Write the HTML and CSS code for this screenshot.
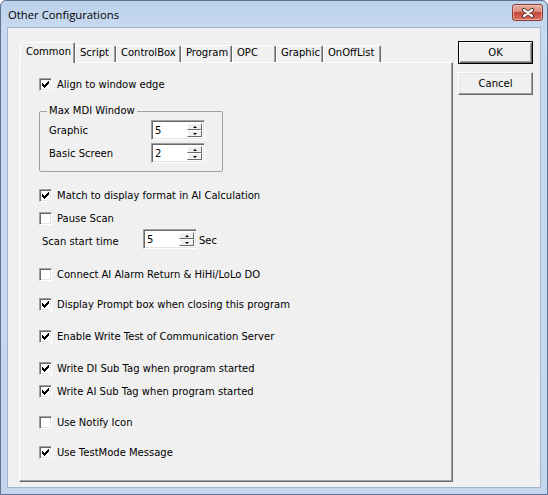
FILE: index.html
```html
<!DOCTYPE html>
<html lang="en">
<head>
    <meta charset="UTF-8">
    <title>Other Configurations</title>
    <link rel="stylesheet" href="styles.css">
</head>
<body>
    <div class="window">
        <div class="titlebar">
            <span class="title">Other Configurations</span>
            <button class="close" aria-label="Close">
                <svg width="14" height="10" viewBox="0 0 14 10">
                    <path d="M3 2 L11 8 M11 2 L3 8" stroke="#4a2a28" stroke-width="4" stroke-linecap="round"/>
                    <path d="M3 2 L11 8 M11 2 L3 8" stroke="#fff" stroke-width="2.2" stroke-linecap="round"/>
                </svg>
            </button>
        </div>

        <div class="client">
            <div class="tabs">
                <div class="tabstrip">
                    <div class="tab active">Common</div>
                    <div class="tab">Script</div>
                    <div class="tab">ControlBox</div>
                    <div class="tab">Program</div>
                    <div class="tab">OPC</div>
                    <div class="tab">Graphic</div>
                    <div class="tab">OnOffList</div>
                </div>

                <div class="page">
                    <label class="check"><span class="box on"></span>Align to window edge</label>

                    <fieldset class="group">
                        <legend>Max MDI Window</legend>
                        <div class="field">
                            <span class="field-label">Graphic</span>
                            <span class="spin"><span class="spin-value">5</span><span class="spin-btns"><span class="spin-btn up"></span><span class="spin-btn down"></span></span></span>
                        </div>
                        <div class="field">
                            <span class="field-label">Basic Screen</span>
                            <span class="spin"><span class="spin-value">2</span><span class="spin-btns"><span class="spin-btn up"></span><span class="spin-btn down"></span></span></span>
                        </div>
                    </fieldset>

                    <label class="check gap-17"><span class="box on"></span>Match to display format in AI Calculation</label>
                    <label class="check gap-10"><span class="box"></span>Pause Scan</label>

                    <div class="field scan">
                        <span class="field-label">Scan start time</span>
                        <span class="spin"><span class="spin-value">5</span><span class="spin-btns"><span class="spin-btn up"></span><span class="spin-btn down"></span></span></span>
                        <span class="unit">Sec</span>
                    </div>

                    <label class="check"><span class="box"></span>Connect AI Alarm Return &amp; HiHi/LoLo DO</label>
                    <label class="check gap-17"><span class="box on"></span>Display Prompt box when closing this program</label>
                    <label class="check"><span class="box on"></span>Enable Write Test of Communication Server</label>
                    <label class="check"><span class="box on"></span>Write DI Sub Tag when program started</label>
                    <label class="check gap-10"><span class="box on"></span>Write AI Sub Tag when program started</label>
                    <label class="check gap-18"><span class="box"></span>Use Notify Icon</label>
                    <label class="check gap-17"><span class="box on"></span>Use TestMode Message</label>
                </div>
            </div>

            <div class="actions">
                <button class="btn default">OK</button>
                <button class="btn">Cancel</button>
            </div>
        </div>
    </div>
</body>
</html>
```

FILE: styles.css
```css
* {
    box-sizing: border-box;
}

body {
    margin: 0;
    font-family: 'DejaVu Sans', sans-serif;
    font-size: 10px;
    color: #000;
    background: #fff;
}

.window {
    width: 548px;
    height: 495px;
    border: 1px solid #5d7294;
    border-radius: 6px 6px 0 0;
    background: linear-gradient(#bcd1ea, #c8daf0 30px, #c3d6ee);
    display: flex;
    flex-direction: column;
}

.titlebar {
    height: 26px;
    display: flex;
    align-items: center;
    padding: 0 4px 0 7px;
}

.title {
    flex: 1;
    font-family: 'Open Sans', sans-serif;
    font-size: 11.3px;
    color: #000;
}

.close {
    align-self: flex-start;
    margin-top: 3px;
    width: 31px;
    height: 17px;
    padding: 0;
    border: 1px solid #8b3b33;
    border-radius: 3px;
    background: linear-gradient(#eab0a4, #d98778 50%, #c4483a 50%, #d67363);
    box-shadow: inset 0 0 0 1px rgba(255, 220, 210, 0.5);
    display: flex;
    align-items: center;
    justify-content: center;
}

.client {
    flex: 1;
    margin: 0 6px 6px;
    padding: 13px 0 0 11px;
    background: #f0f0f0;
    border: 1px solid #a3b6cf;
    display: flex;
    align-items: flex-start;
}

/* tab control */
.tabs {
    width: 434px;
    margin-top: 1px;
}

.tabstrip {
    display: grid;
    grid-template-columns: 55px 41px 65px 51px 44px 47px 58px;
    align-items: end;
    height: 20px;
    padding-left: 1px;
}

.tab {
    height: 17px;
    padding: 1px 0 0 4px;
    line-height: 12px;
    white-space: nowrap;
    border-top: 1px solid #fff;
    border-left: 1px solid #fff;
    border-right: 1px solid #696969;
    border-radius: 2px 2px 0 0;
    box-shadow: inset -1px 0 #a0a0a0;
}

.tab.active {
    height: 21px;
    margin-bottom: -1px;
    padding: 3px 0 0 5px;
    position: relative;
    z-index: 1;
    background: #f0f0f0;
}

.page {
    height: 420px;
    padding: 15px 0 0 19px;
    border: 1px solid;
    border-color: #fff #696969 #696969 #fff;
    box-shadow: inset -1px -1px #a0a0a0;
}

/* checkboxes */
.check {
    display: flex;
    align-items: center;
    height: 13px;
    margin-top: 19px;
    white-space: nowrap;
}

.check:first-child {
    margin-top: 0;
}

.check.gap-10 {
    margin-top: 10px;
}

.check.gap-17 {
    margin-top: 17px;
}

.check.gap-18 {
    margin-top: 18px;
}

.box {
    width: 13px;
    height: 13px;
    margin-right: 5px;
    flex: none;
    background: #fff;
    border: 1px solid;
    border-color: #a0a0a0 #fff #fff #a0a0a0;
    box-shadow: inset 1px 1px #696969, inset -1px -1px #e3e3e3;
    display: flex;
    align-items: center;
    justify-content: center;
}

.box.on::after {
    content: '';
    width: 7px;
    height: 7px;
    background: #000;
    clip-path: polygon(0 28.57%, 14.29% 28.57%, 14.29% 42.86%, 28.57% 42.86%, 28.57% 57.14%, 42.86% 57.14%, 42.86% 42.86%, 57.14% 42.86%, 57.14% 28.57%, 71.43% 28.57%, 71.43% 14.29%, 85.71% 14.29%, 85.71% 0, 100% 0, 100% 42.86%, 85.71% 42.86%, 85.71% 57.14%, 71.43% 57.14%, 71.43% 71.43%, 57.14% 71.43%, 57.14% 85.71%, 42.86% 85.71%, 42.86% 100%, 28.57% 100%, 28.57% 85.71%, 14.29% 85.71%, 14.29% 71.43%, 0 71.43%);
}

/* group box */
.group {
    width: 184px;
    min-width: 0;
    margin: 14px 0 0;
    padding: 3px 0 8px;
    border: 1px solid #a0a0a0;
    border-radius: 2px;
}

.group legend {
    margin-left: 7px;
    padding: 0 2px;
    line-height: 12px;
}

.field {
    display: flex;
    align-items: center;
}

.field + .field {
    margin-top: 3px;
}

.field-label {
    width: 102px;
    margin-left: 9px;
}

.field.scan {
    margin-top: 4px;
}

.field.scan .field-label {
    width: 101px;
    margin-left: 3px;
    padding-top: 4px;
}

.unit {
    margin-left: 2px;
    padding-top: 2px;
}

/* spin edit */
.spin {
    display: flex;
    width: 54px;
    height: 20px;
    padding: 2px 2px 2px 3px;
    background: #fff;
    border: 1px solid;
    border-color: #a0a0a0 #fff #fff #a0a0a0;
    box-shadow: inset 1px 1px #696969, inset -1px -1px #e3e3e3;
}

.spin-value {
    flex: 1;
    line-height: 16px;
}

.spin-btns {
    width: 15px;
    display: flex;
    flex-direction: column;
}

.spin-btn {
    flex: 1;
    background: #f0f0f0;
    border: 1px solid;
    border-color: #fff #696969 #696969 #fff;
    display: flex;
    align-items: center;
    justify-content: center;
}

.spin-btn::after {
    content: '';
    border-left: 2px solid transparent;
    border-right: 2px solid transparent;
}

.spin-btn.up::after {
    border-bottom: 2px solid #000;
}

.spin-btn.down::after {
    border-top: 2px solid #000;
}

/* dialog buttons */
.actions {
    margin-left: 5px;
    display: flex;
    flex-direction: column;
    gap: 8px;
}

.btn {
    width: 75px;
    height: 23px;
    padding: 0;
    font: inherit;
    color: #000;
    background: #f0f0f0;
    border: 1px solid;
    border-color: #fff #696969 #696969 #fff;
    box-shadow: inset -1px -1px #a0a0a0, inset 1px 1px #e3e3e3;
}

.btn.default {
    border: 1px solid #000;
    box-shadow: inset 1px 1px #fff, inset -1px -1px #696969, inset -2px -2px #a0a0a0;
}
```
